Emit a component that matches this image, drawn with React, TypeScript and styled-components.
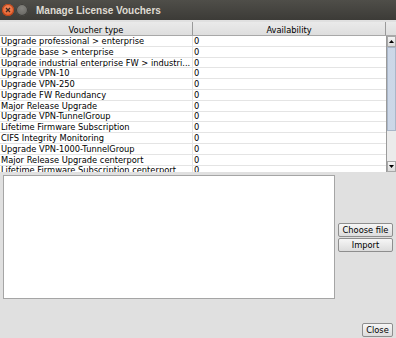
import React from 'react'
import styled, { createGlobalStyle } from 'styled-components'

const Global = createGlobalStyle`
	html, body {
		margin: 0;
		padding: 0;
		background: #e0e0e0;
	}
`

const Window = styled.div`
	width: 396px;
	height: 338px;
	display: flex;
	flex-direction: column;
	background: #e0e0e0;
	font-family: 'DejaVu Sans', 'Liberation Sans', sans-serif;
	font-size: 8.3px;
	color: #000;
	overflow: hidden;
`

const TitleBar = styled.div`
	height: 20px;
	flex: none;
	display: flex;
	align-items: center;
	padding-left: 2px;
	background: linear-gradient(#4f4e49, #3c3b37);
`

const Dot = styled.span<{ $close?: boolean }>`
	width: 12px;
	height: 12px;
	border-radius: 50%;
	margin-right: 2px;
	display: flex;
	align-items: center;
	justify-content: center;
	background: ${p =>
		p.$close
			? 'radial-gradient(circle at 50% 35%, #f58a5c, #e0531f)'
			: 'radial-gradient(circle at 50% 35%, #85847f, #5f5e5a)'};
	box-shadow: inset 0 0 0 1px ${p => (p.$close ? '#b8431a' : '#3e3d39')};
`

const Title = styled.span`
	margin-left: 6px;
	font-family: 'Liberation Sans', sans-serif;
	font-weight: 700;
	font-size: 10px;
	color: #dfdbd2;
`

const Table = styled.div`
	margin-top: 2px;
	height: 150px;
	flex: none;
	display: flex;
	flex-direction: column;
	background: #fff;
`

const HeaderRow = styled.div`
	height: 14px;
	flex: none;
	display: grid;
	grid-template-columns: 193px 193px 10px;
	background: linear-gradient(#eaeaea, #dedede);
	border-bottom: 1px solid #a8a8a8;
	box-sizing: border-box;
`

const HeaderCell = styled.div`
	display: flex;
	align-items: center;
	justify-content: center;
	border-right: 1px solid #9a9a9a;
	padding-top: 3px;
	&:last-child {
		border-right: 0;
	}
`

const BodyWrap = styled.div`
	flex: 1;
	display: flex;
	overflow: hidden;
`

const Rows = styled.div`
	flex: 1;
	overflow: hidden;
`

const Row = styled.div`
	height: 10.8px;
	display: grid;
	grid-template-columns: 193px 1fr;
	border-bottom: 1px solid #e4e4e4;
	box-sizing: border-box;
`

const Cell = styled.div`
	padding-left: 1px;
	display: flex;
	align-items: center;
	white-space: nowrap;
	overflow: hidden;
	border-right: 1px solid #e4e4e4;
	&:last-child {
		border-right: 0;
	}
`

const ScrollBar = styled.div`
	width: 10px;
	flex: none;
	display: flex;
	flex-direction: column;
	background: #ebebeb;
	border-left: 1px solid #9a9a9a;
	box-sizing: border-box;
`

const Arrow = styled.div`
	height: 11px;
	flex: none;
	display: flex;
	align-items: center;
	justify-content: center;
	background: linear-gradient(#f4f4f4, #dcdcdc);
	border: 1px solid #a8a8a8;
	box-sizing: border-box;
`

const Thumb = styled.div`
	height: 84px;
	flex: none;
	background-color: #e9eef5;
	background-image: radial-gradient(circle, #a9bbd6 0.6px, transparent 0.8px);
	background-size: 2px 2px;
	border: 1px solid #a9b6c8;
	box-sizing: border-box;
`

const Track = styled.div`
	flex: 1;
`

const Middle = styled.div`
	margin-top: 3px;
	display: flex;
	align-items: center;
	flex: none;
`

const TextBox = styled.textarea`
	margin-left: 3px;
	width: 332px;
	height: 124px;
	box-sizing: border-box;
	border: 1px solid #a5a5a5;
	background: #fff;
	resize: none;
	outline: none;
	padding: 0;
`

const SideButtons = styled.div`
	flex: 1;
	display: flex;
	flex-direction: column;
	align-items: flex-end;
	padding-right: 3px;
	gap: 1px;
`

const Button = styled.button<{ $width: number }>`
	width: ${p => p.$width}px;
	height: 14px;
	padding: 0;
	font-family: 'DejaVu Sans', 'Liberation Sans', sans-serif;
	font-size: 8.3px;
	color: #000;
	background: linear-gradient(#f6f6f6, #dcdcdc);
	border: 1px solid #8e8e8e;
	border-radius: 2px;
	box-sizing: border-box;
`

const Footer = styled.div`
	margin-top: auto;
	display: flex;
	justify-content: flex-end;
	padding: 0 3px 1px 0;
`

const vouchers = [
	'Upgrade professional > enterprise',
	'Upgrade base > enterprise',
	'Upgrade industrial enterprise FW > industri...',
	'Upgrade VPN-10',
	'Upgrade VPN-250',
	'Upgrade FW Redundancy',
	'Major Release Upgrade',
	'Upgrade VPN-TunnelGroup',
	'Lifetime Firmware Subscription',
	'CIFS Integrity Monitoring',
	'Upgrade VPN-1000-TunnelGroup',
	'Major Release Upgrade centerport',
	'Lifetime Firmware Subscription centerport',
]

const Triangle = ({ up }: { up?: boolean }) => (
	<svg width="5" height="3" viewBox="0 0 5 3">
		<path d={up ? 'M0 3 L2.5 0 L5 3 Z' : 'M0 0 L5 0 L2.5 3 Z'} fill="#000" />
	</svg>
)

export default function App() {
	return (
		<>
			<Global />
			<Window>
				<TitleBar>
					<Dot $close>
						<svg width="6" height="6" viewBox="0 0 6 6">
							<path d="M1 1 L5 5 M5 1 L1 5" stroke="#3c2a20" strokeWidth="1.3" />
						</svg>
					</Dot>
					<Dot />
					<Title>Manage License Vouchers</Title>
				</TitleBar>
				<Table>
					<HeaderRow>
						<HeaderCell>Voucher type</HeaderCell>
						<HeaderCell>Availability</HeaderCell>
						<HeaderCell />
					</HeaderRow>
					<BodyWrap>
						<Rows>
							{vouchers.map((v, k) => (
								<Row key={k}>
									<Cell>{v}</Cell>
									<Cell>0</Cell>
								</Row>
							))}
						</Rows>
						<ScrollBar>
							<Arrow>
								<Triangle up />
							</Arrow>
							<Thumb />
							<Track />
							<Arrow>
								<Triangle />
							</Arrow>
						</ScrollBar>
					</BodyWrap>
				</Table>
				<Middle>
					<TextBox />
					<SideButtons>
						<Button $width={55}>Choose file</Button>
						<Button $width={55}>Import</Button>
					</SideButtons>
				</Middle>
				<Footer>
					<Button $width={31}>Close</Button>
				</Footer>
			</Window>
		</>
	)
}
